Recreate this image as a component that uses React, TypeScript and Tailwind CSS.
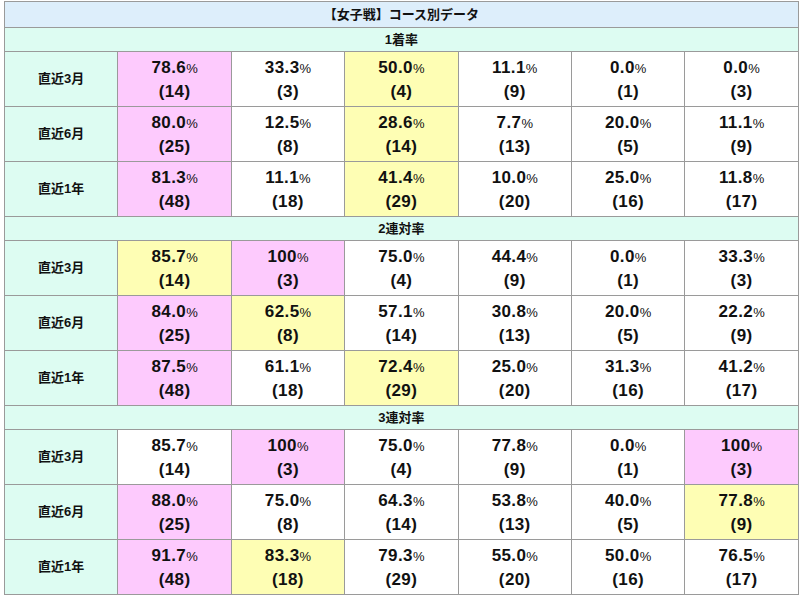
type Tone = "pink" | "yellow" | undefined;
type Cell = { rate: string; count: number; tone?: Tone };
type Row = { label: string; cells: Cell[] };
type Section = { title: string; rows: Row[] };

const c = (rate: string, count: number, tone?: Tone): Cell => ({ rate, count, tone });

const sections: Section[] = [
  {
    title: "1着率",
    rows: [
      { label: "直近3月", cells: [c("78.6", 14, "pink"), c("33.3", 3), c("50.0", 4, "yellow"), c("11.1", 9), c("0.0", 1), c("0.0", 3)] },
      { label: "直近6月", cells: [c("80.0", 25, "pink"), c("12.5", 8), c("28.6", 14, "yellow"), c("7.7", 13), c("20.0", 5), c("11.1", 9)] },
      { label: "直近1年", cells: [c("81.3", 48, "pink"), c("11.1", 18), c("41.4", 29, "yellow"), c("10.0", 20), c("25.0", 16), c("11.8", 17)] },
    ],
  },
  {
    title: "2連対率",
    rows: [
      { label: "直近3月", cells: [c("85.7", 14, "yellow"), c("100", 3, "pink"), c("75.0", 4), c("44.4", 9), c("0.0", 1), c("33.3", 3)] },
      { label: "直近6月", cells: [c("84.0", 25, "pink"), c("62.5", 8, "yellow"), c("57.1", 14), c("30.8", 13), c("20.0", 5), c("22.2", 9)] },
      { label: "直近1年", cells: [c("87.5", 48, "pink"), c("61.1", 18), c("72.4", 29, "yellow"), c("25.0", 20), c("31.3", 16), c("41.2", 17)] },
    ],
  },
  {
    title: "3連対率",
    rows: [
      { label: "直近3月", cells: [c("85.7", 14), c("100", 3, "pink"), c("75.0", 4), c("77.8", 9), c("0.0", 1), c("100", 3, "pink")] },
      { label: "直近6月", cells: [c("88.0", 25, "pink"), c("75.0", 8), c("64.3", 14), c("53.8", 13), c("40.0", 5), c("77.8", 9, "yellow")] },
      { label: "直近1年", cells: [c("91.7", 48, "pink"), c("83.3", 18, "yellow"), c("79.3", 29), c("55.0", 20), c("50.0", 16), c("76.5", 17)] },
    ],
  },
];

const toneClass: Record<string, string> = {
  pink: "bg-[#fdcafd]",
  yellow: "bg-[#fefeb4]",
  none: "bg-white",
};

function DataCell({ cell }: { cell: Cell }) {
  return (
    <td
      className={`border border-[#9a9a9a] text-center align-middle text-[#111] ${toneClass[cell.tone ?? "none"]}`}
    >
      <div className="font-['Liberation_Sans',Arial,sans-serif] leading-[23px]">
        <div>
          <span className="text-[17px] font-bold tracking-[0.4px]">{cell.rate}</span>
          <span className="text-[13px]">%</span>
        </div>
        <div className="text-[17px] font-bold tracking-[0.4px]">({cell.count})</div>
      </div>
    </td>
  );
}

export default function App() {
  return (
    <div className="bg-white pl-[4px] pt-[1px] font-['Liberation_Sans','Noto_Sans_CJK_JP',sans-serif]">
      <table className="w-[794px] table-fixed border-collapse">
        <colgroup>
          {Array.from({ length: 7 }).map((_, i) => (
            <col key={i} className="w-[113.4px]" />
          ))}
        </colgroup>
        <tbody>
          <tr className="h-[26px]">
            <td
              colSpan={7}
              className="border border-[#9a9a9a] bg-[#ddeefb] text-center text-[13px] font-bold text-[#111]"
            >
              【女子戦】コース別データ
            </td>
          </tr>
          {sections.map((section) => (
            <SectionRows key={section.title} section={section} />
          ))}
        </tbody>
      </table>
    </div>
  );
}

function SectionRows({ section }: { section: Section }) {
  return (
    <>
      <tr className="h-[24px]">
        <td
          colSpan={7}
          className="border border-[#9a9a9a] bg-[#ddfcf2] text-center text-[13px] font-bold text-[#111]"
        >
          {section.title}
        </td>
      </tr>
      {section.rows.map((row) => (
        <tr key={row.label} className="h-[55px]">
          <td className="border border-[#9a9a9a] bg-[#ddfcf2] text-center text-[13px] font-bold text-[#111]">
            {row.label}
          </td>
          {row.cells.map((cell, i) => (
            <DataCell key={i} cell={cell} />
          ))}
        </tr>
      ))}
    </>
  );
}
